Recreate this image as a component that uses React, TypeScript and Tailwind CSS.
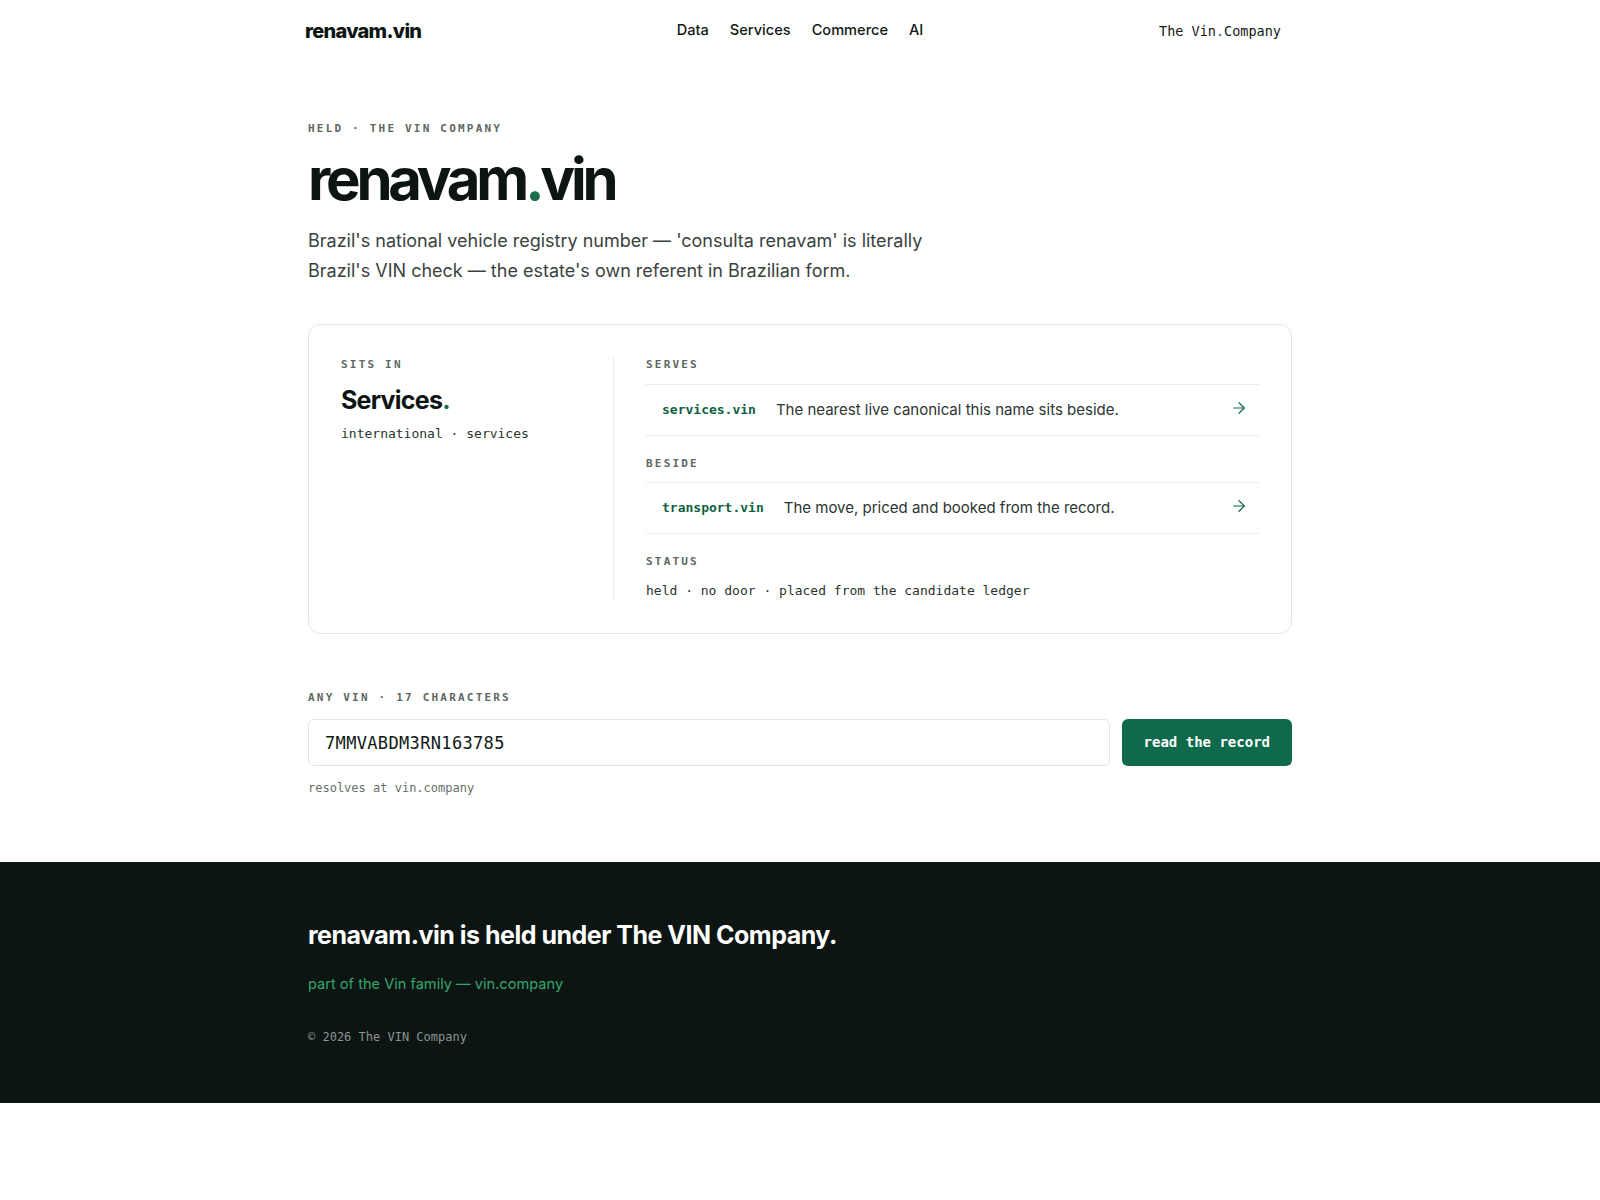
import { ArrowRight } from "lucide-react";

const SANS = "font-['Inter','Noto_Sans',sans-serif]";
const MONO = "font-['DejaVu_Sans_Mono','Liberation_Mono',monospace]";

function Label({ children }: { children: React.ReactNode }) {
  return (
    <div className={`${MONO} text-[11px] font-bold uppercase leading-4 tracking-[0.2em] text-[#5d6762]`}>
      {children}
    </div>
  );
}

function LinkRow({ code, text }: { code: string; text: string }) {
  return (
    <a
      href="#"
      className="flex h-[52px] items-center border-y border-[#ebedec] pl-4 pr-[11px]"
    >
      <span className={`${MONO} text-[13px] font-semibold text-[#0f5f43]`}>{code}</span>
      <span className="ml-5 text-[15px] text-[#2c3531]">{text}</span>
      <ArrowRight className="ml-auto -mt-1 text-[#0f6b4b]" size={18} strokeWidth={1.6} />
    </a>
  );
}

export default function App() {
  return (
    <div className={`${SANS} bg-white text-[#0d1512]`}>
      <header className="mx-auto grid h-[62px] max-w-[1024px] grid-cols-[1fr_auto_1fr] items-center px-[17px]">
        <a href="#" className="text-[20px] font-extrabold tracking-[-0.035em] text-[#0d1512]">
          renavam.vin
        </a>
        <nav className="flex items-center gap-[21px] text-[14.6px] font-medium text-[#111916]">
          <a href="#">Data</a>
          <a href="#">Services</a>
          <a href="#">Commerce</a>
          <a href="#">AI</a>
        </nav>
        <a
          href="#"
          className={`${MONO} mr-[14px] justify-self-end text-[13.5px] font-medium text-[#111916]`}
        >
          The Vin<span className="text-[#1a6e4c]">.</span>Company
        </a>
      </header>

      <main className="mx-auto max-w-[1024px] px-5 pb-[66px]">
        <section className="pt-[59px]">
          <Label>held · the vin company</Label>
          <h1 className="mt-[13px] text-[58px] font-bold leading-none tracking-[-0.072em] text-[#0d1512]">
            renavam<span className="text-[#1a6e4c]">.</span>vin
          </h1>
          <p className="mt-[18px] max-w-[640px] text-[18px] leading-[29.6px] text-[#3a423e]">
            Brazil's national vehicle registry number — 'consulta renavam' is literally Brazil's VIN
            check — the estate's own referent in Brazilian form.
          </p>
        </section>

        <section className="mt-[39px] flex rounded-xl border border-[#e6e8e7] p-8">
          <div className="w-[272px] shrink-0">
            <Label>sits in</Label>
            <div className="mt-3 text-[25px] font-bold leading-[30px] tracking-[-0.03em]">
              Services<span className="text-[#1a6e4c]">.</span>
            </div>
            <div className={`${MONO} mt-[9px] text-[13px] leading-5 text-[#2a332e]`}>
              international · services
            </div>
          </div>
          <div className="flex-1 border-l border-[#ebedec] pl-8">
            <Label>serves</Label>
            <div className="mt-[11px]">
              <LinkRow code="services.vin" text="The nearest live canonical this name sits beside." />
            </div>
            <div className="mt-5">
              <Label>beside</Label>
            </div>
            <div className="mt-[10px]">
              <LinkRow code="transport.vin" text="The move, priced and booked from the record." />
            </div>
            <div className="mt-5">
              <Label>status</Label>
            </div>
            <div className={`${MONO} mt-[11px] text-[13px] leading-5 text-[#2a332e]`}>
              held · no door · placed from the candidate ledger
            </div>
          </div>
        </section>

        <section className="mt-14">
          <Label>any vin · 17 characters</Label>
          <form className="mt-[13px] flex gap-3" onSubmit={(e) => e.preventDefault()}>
            <input
              defaultValue="7MMVABDM3RN163785"
              className={`${MONO} h-[47px] flex-1 rounded-md border border-[#e3e5e4] px-4 text-[17px] tracking-[0.02em] text-[#111916] outline-none`}
            />
            <button
              type="submit"
              className={`${MONO} h-[47px] rounded-md bg-[#0e6a4a] px-[22px] text-[14px] font-bold text-white`}
            >
              read the record
            </button>
          </form>
          <div className={`${MONO} mt-[14px] text-[12px] leading-4 text-[#66706b]`}>
            resolves at vin.company
          </div>
        </section>
      </main>

      <footer className="bg-[#0c1512] py-[58px]">
        <div className="mx-auto max-w-[1024px] px-5">
          <div className="text-[25px] font-bold leading-[30px] tracking-[-0.02em] text-white">
            renavam.vin is held under The VIN Company.
          </div>
          <a href="#" className="mt-[23px] block text-[14.6px] leading-[22px] text-[#35a56f]">
            part of the Vin family — vin.company
          </a>
          <div className={`${MONO} mt-[34px] text-[12px] leading-4 text-[#8a948f]`}>
            © 2026 The VIN Company
          </div>
        </div>
      </footer>
    </div>
  );
}
